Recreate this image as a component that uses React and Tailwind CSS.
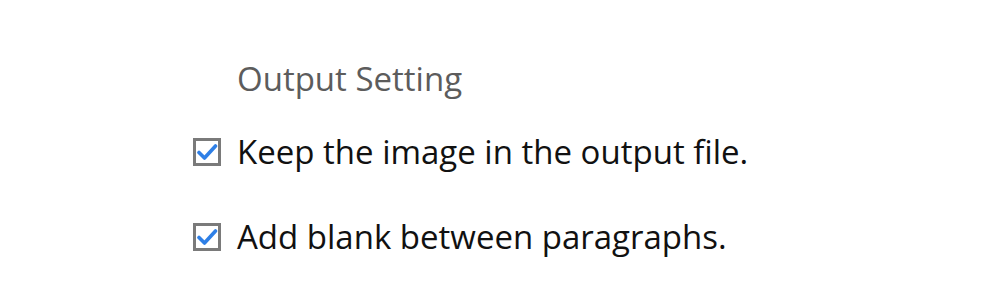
const OPTIONS = [
  { id: 'keep-image', label: 'Keep the image in the output file.' },
  { id: 'add-blank', label: 'Add blank between paragraphs.' },
];

function CheckBox() {
  return (
    <span className="w-[28px] h-[28px] shrink-0 border-[3px] border-[#7a7a7a] bg-white flex items-center justify-center">
      <svg width="22" height="22" viewBox="0 0 22 22" fill="none">
        <path d="M3 11.5 L8.5 17 L19.5 5" stroke="#2e7fe6" strokeWidth="3.6" strokeLinecap="round" strokeLinejoin="round" />
      </svg>
    </span>
  );
}

export default function App() {
  return (
    <div className="w-[1000px] h-[306px] bg-white font-['Open_Sans',sans-serif] pl-[193px] pt-[55px]">
      <h2 className="pl-[44px] text-[33px] leading-[48px] text-[#5c5c5c]">Output Setting</h2>
      <div className="mt-[25px] flex flex-col gap-[37px]">
        {OPTIONS.map(o => (
          <label key={o.id} className="flex items-center gap-[16px] h-[48px]">
            <CheckBox />
            <span className="text-[33px] text-[#111]">{o.label}</span>
          </label>
        ))}
      </div>
    </div>
  );
}
